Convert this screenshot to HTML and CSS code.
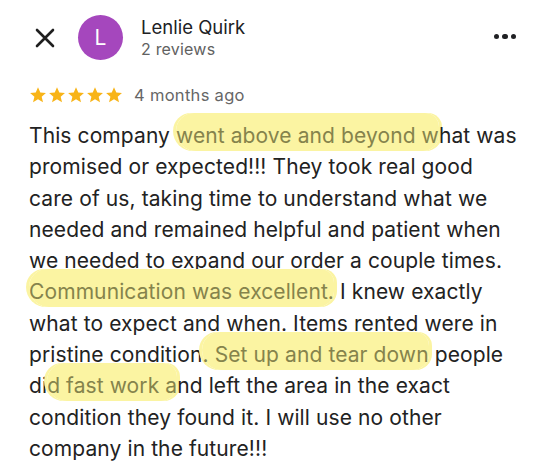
FILE: index.html
```html
<!DOCTYPE html>
<html>
<head>
<meta charset="utf-8">
<link rel="stylesheet" href="styles.css">
</head>
<body>
<div class="review">
  <div class="header">
    <svg class="close" width="20" height="20" viewBox="0 0 20 20"><path d="M2 2 L18 18 M18 2 L2 18" stroke="#1f1f1f" stroke-width="2.6" stroke-linecap="round"/></svg>
    <div class="avatar">L</div>
    <div class="who">
      <div class="name">Lenlie Quirk</div>
      <div class="count">2 reviews</div>
    </div>
    <div class="more"><span></span><span></span><span></span></div>
  </div>
  <div class="meta">
    <div class="stars">
      <svg viewBox="0 0 24 24"><path d="M12 1.8l3.1 7 7.5.6-5.7 5 1.8 7.4L12 17.8l-6.6 4 1.8-7.4-5.7-5 7.5-.6z"/></svg>
      <svg viewBox="0 0 24 24"><path d="M12 1.8l3.1 7 7.5.6-5.7 5 1.8 7.4L12 17.8l-6.6 4 1.8-7.4-5.7-5 7.5-.6z"/></svg>
      <svg viewBox="0 0 24 24"><path d="M12 1.8l3.1 7 7.5.6-5.7 5 1.8 7.4L12 17.8l-6.6 4 1.8-7.4-5.7-5 7.5-.6z"/></svg>
      <svg viewBox="0 0 24 24"><path d="M12 1.8l3.1 7 7.5.6-5.7 5 1.8 7.4L12 17.8l-6.6 4 1.8-7.4-5.7-5 7.5-.6z"/></svg>
      <svg viewBox="0 0 24 24"><path d="M12 1.8l3.1 7 7.5.6-5.7 5 1.8 7.4L12 17.8l-6.6 4 1.8-7.4-5.7-5 7.5-.6z"/></svg>
    </div>
    <span class="ago">4 months ago</span>
  </div>
  <p class="text">This company <span class="hl">went above and beyond w</span>hat was promised or expected!!! They took real good care of us, taking time to understand what we needed and remained helpful and patient when we needed to expand our order a couple times. <span class="hl">Communication was excellent.</span> I knew exactly what to expect and when. Items rented were in pristine condition<span class="hl">. Set up and tear down</span> people di<span class="hl">d fast work a</span>nd left the area in the exact condition they found it. I will use no other company in the future!!!</p>
</div>
</body>
</html>
```
FILE: styles.css
```css
html, body {
  margin: 0;
  padding: 0;
  background: #ffffff;
}
body {
  font-family: Inter, "Noto Sans", "Liberation Sans", sans-serif;
  color: #1f1f1f;
}
.review {
  padding: 15px 28px 0 29px;
}
.header {
  display: flex;
  align-items: center;
  height: 45px;
}
.close {
  margin-left: 6px;
  margin-right: 23px;
  flex: none;
}
.avatar {
  width: 45px;
  height: 45px;
  border-radius: 50%;
  background: #a547bd;
  color: #fff;
  display: flex;
  align-items: center;
  justify-content: center;
  font-size: 21px;
  flex: none;
}
.who {
  margin-left: 18px;
  flex: 1;
  margin-top: -1px;
}
.name {
  font-size: 18.5px;
  line-height: 23px;
  color: #202124;
}
.count {
  font-size: 16px;
  line-height: 20px;
  color: #616161;
  letter-spacing: 0.2px;
}
.more {
  display: flex;
  gap: 3px;
  margin-right: 6px;
  margin-top: -2px;
}
.more span {
  width: 5.5px;
  height: 5.5px;
  border-radius: 50%;
  background: #202124;
}
.meta {
  display: flex;
  align-items: center;
  margin-top: 24px;
  height: 22px;
}
.stars {
  display: flex;
  gap: 1px;
  margin-right: 11px;
}
.stars svg {
  width: 18px;
  height: 18px;
  fill: #f8b418;
}
.ago {
  font-size: 16.5px;
  color: #666666;
  letter-spacing: 0.3px;
}
.text {
  margin: 14px 0 0 0;
  font-size: 21px;
  line-height: 31.3px;
  color: #222222;
  letter-spacing: 0.1px;
}
.hl {
  background: #fbf4a2;
  color: #85834c;
  padding: 10px 0 3px 0;
  border-radius: 18px 14px 16px 20px;
  box-shadow: -3px 0 0 #fbf4a2, 3px 0 0 #fbf4a2;
  -webkit-box-decoration-break: clone;
  box-decoration-break: clone;
}
```
